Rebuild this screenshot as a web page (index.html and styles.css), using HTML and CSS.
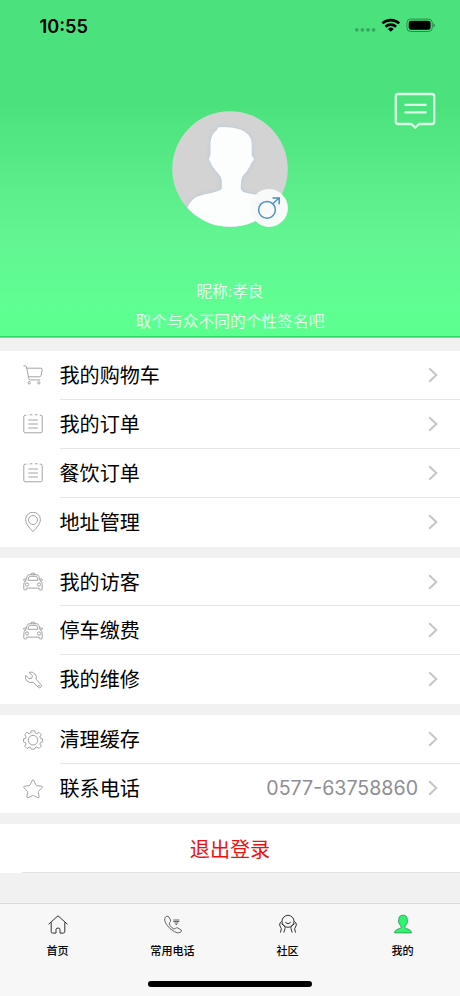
FILE: index.html
```html
<!DOCTYPE html>
<html lang="zh-CN">
<head>
<meta charset="utf-8">
<meta name="viewport" content="width=device-width, initial-scale=1">
<title>我的</title>
<link rel="stylesheet" href="styles.css">
</head>
<body>
<svg class="defs" aria-hidden="true">
  <symbol id="order" viewBox="0 0 20 20"><path d="M3.300 1.200H2.200Q.8 1.200.8 2.600v14.900q0 1.300 1.400 1.300h15.600q1.400 0 1.400-1.300V2.600q0-1.400-1.400-1.400h-1.100M6.800.8h2.700M11.800.8h2.700M4.800 1.200h.5M5.300 6h9.600M5.300 10h9.600M5.300 14h9.600"/></symbol>
  <symbol id="car" viewBox="0 0 20 20"><path d="M2.700 8.900 4.200 4.400Q4.700 2.700 6.400 2.700h7.200q1.700 0 2.200 1.700l1.500 4.500M3.200 7H1.500Q.2 7 .6 8.200q.3.900 2 .7M16.800 7h1.700q1.300 0 .9 1.200-.3.900-2 .7M2.700 8.900Q.8 10.400.8 12.400v4.700q0 .8.7.8h1.600q.7 0 .7-.8v-1h12.400v1q0 .8.7.8h1.600q.7 0 .7-.8v-4.700q0-2-1.900-3.500M5 8.300 6 5q.2-.7.9-.7h6.200q.7 0 .9.700l1 3.300zM8 2.600l.5-1.500h3l.5 1.500"/><circle cx="4" cy="12.500" r="1.600"/><circle cx="16" cy="12.500" r="1.600"/></symbol>
  <symbol id="chevron" viewBox="0 0 10 16"><path d="M1.200 1.200 8.300 8l-7.100 6.800"/></symbol>
</svg>

<main class="app">
  <header class="profile">
    <div class="status">
      <span class="clock">10:55</span>
      <svg class="signals" viewBox="0 0 84 16">
        <g fill="#35ab5c"><circle cx="4.800" cy="11.800" r="1.900"/><circle cx="10.400" cy="11.800" r="1.900"/><circle cx="16" cy="11.800" r="1.900"/><circle cx="21.600" cy="11.800" r="1.900"/></g>
        <g fill="none" stroke="#000" stroke-width="2.600"><path d="M30.400 5.400a12.300 12.300 0 0 1 16.800 0"/><path d="M33.500 8.700a7.800 7.800 0 0 1 10.600 0"/></g>
        <path d="M35.900 11a4.200 4.200 0 0 1 5.800 0L38.800 13.800z"/>
        <rect x="54.900" y="1.100" width="25.400" height="12.400" rx="3.700" fill="none" stroke="#2c8b4b"/>
        <rect x="56.700" y="2.800" width="21.900" height="9" rx="2.200"/>
        <path d="M81.400 5.200q1.500.6 1.500 2.100t-1.500 2.100z" fill="#2c8b4b"/>
      </svg>
    </div>
    <svg class="message" viewBox="0 0 42 38"><path d="M4 2h34q2.200 0 2.200 2.200v25.600q0 2.200-2.200 2.200H25l-3.800 3.600-3.800-3.600H4q-2.200 0-2.200-2.200V4.200Q1.800 2 4 2z"/><path d="M10.500 12.800h22M10.500 20.300h22"/></svg>
    <div class="avatar">
      <svg class="portrait" viewBox="172 111 116 116">
        <defs>
          <clipPath id="round"><circle cx="230" cy="169" r="57.800"/></clipPath>
          <filter id="halo" x="-20%" y="-20%" width="140%" height="140%"><feGaussianBlur stdDeviation="2.500"/></filter>
          <path id="person" d="M217.500 129.500Q217.300 127.500 219 127.200Q231 126 241 129.800Q251 134 251.700 143V154.500Q251.800 156 253.500 158Q254.500 160 252.300 161.500Q250.500 164 249.800 166.500Q247 171.500 242.800 176Q240.800 179 240.700 189Q242 192.500 249 193.500L263 196Q270.500 199 271.500 209V229H187V209Q190 197.500 204 194.500Q220.500 191.500 221.800 188.500V181Q221.500 176.500 217 172Q211.500 166 210.500 162Q208 159.500 209.500 157.500Q210.800 155.500 210.500 153V142Q211.500 133.500 217.500 129.500Z"/>
        </defs>
        <g clip-path="url(#round)">
          <rect x="172" y="111" width="116" height="116" fill="#d3d3d3"/>
          <use href="#person" fill="#b4cbda" filter="url(#halo)"/>
          <use href="#person" fill="#fcfdfd"/>
        </g>
      </svg>
      <svg class="gender" viewBox="0 0 38 38"><circle cx="19" cy="19" r="18.900" fill="#f8f9f9"/><g fill="none" stroke="#4a90c8" stroke-width="1.500"><circle cx="17" cy="20.800" r="8.400"/><path d="m22.800 14.800 6.200-5.800M22.500 9h6.700v6.200"/></g></svg>
    </div>
    <p class="nickname">昵称:孝良</p>
    <p class="signature">取个与众不同的个性签名吧</p>
  </header>

  <div class="groups">
    <section class="group">
      <a class="row"><svg class="icon" viewBox="0 0 20 20"><path d="M.5.900h1.800q.9 0 1.100 1l2.500 12q.2 1 1.300 1h10.200M4 3.200h13.800q1.700 0 1.400 1.600l-1.200 5.800q-.3 1.200-1.600 1.200H5.600"/><circle cx="6.200" cy="17.800" r="1.200"/><circle cx="15.800" cy="17.800" r="1.200"/></svg><span class="cell"><b>我的购物车</b><svg class="chevron"><use href="#chevron"/></svg></span></a>
      <a class="row"><svg class="icon"><use href="#order"/></svg><span class="cell"><b>我的订单</b><svg class="chevron"><use href="#chevron"/></svg></span></a>
      <a class="row"><svg class="icon"><use href="#order"/></svg><span class="cell"><b>餐饮订单</b><svg class="chevron"><use href="#chevron"/></svg></span></a>
      <a class="row"><svg class="icon" viewBox="0 0 20 20"><path d="M10 19.700Q2.600 12.200 2.600 7.600a7.400 7.400 0 0 1 14.800 0Q17.400 12.200 10 19.700z"/><circle cx="10" cy="8" r="4.500"/></svg><span class="cell"><b>地址管理</b><svg class="chevron"><use href="#chevron"/></svg></span></a>
    </section>
    <section class="group">
      <a class="row"><svg class="icon"><use href="#car"/></svg><span class="cell"><b>我的访客</b><svg class="chevron"><use href="#chevron"/></svg></span></a>
      <a class="row"><svg class="icon"><use href="#car"/></svg><span class="cell"><b>停车缴费</b><svg class="chevron"><use href="#chevron"/></svg></span></a>
      <a class="row"><svg class="icon" viewBox="0 0 20 20"><path d="M6 2.300Q9.500 1.200 12 4q2 2.400 1.100 5.200l4.800 5.300q1.200 1.500 0 2.700t-2.700 0L10 12.300Q6.600 13.400 4 11 1.700 8.500 2.700 5.300l3.400 3.500 2.700-.6.600-2.600z"/><circle cx="16" cy="15.700" r=".5"/></svg><span class="cell"><b>我的维修</b><svg class="chevron"><use href="#chevron"/></svg></span></a>
    </section>
    <section class="group">
      <a class="row"><svg class="icon" viewBox="0 0 20 20"><path d="M8.300 .8h3.400l.6 2.300 1.500.6 2.200-1.400 2.300 2.300-1.400 2.300.6 1.400 2 .6v3l-2 .6-.6 1.500 1.400 2.200-2.300 2.300-2.200-1.400-1.500.6-.6 1.400H8.300l-.6-1.400-1.500-.6L4 18.500l-2.300-2.300 1.400-2.200-.6-1.500-2-.6v-3l2-.6.600-1.400L1.700 4.600 4 2.300l2.200 1.400 1.500-.6z"/><circle cx="10" cy="10.200" r="4.800"/></svg><span class="cell"><b>清理缓存</b><svg class="chevron"><use href="#chevron"/></svg></span></a>
      <a class="row"><svg class="icon" viewBox="0 0 20 20"><path d="M9.300 1.200q.7-1 1.400 0l2.300 4.900q.2.400.7.500l5 .7q1 .3.400 1.200l-3.500 3.800q-.4.400-.3.900l.8 4.800q0 1.100-1 .8L10.500 16.600q-.5-.2-1 0L4.900 18.800q-1 .3-1-.8l.8-4.800q.1-.5-.3-.9L.9 8.500Q.3 7.600 1.300 7.300l5-.7q.5-.1.700-.5z"/></svg><span class="cell"><b>联系电话</b><span class="phone">0577-63758860</span><svg class="chevron"><use href="#chevron"/></svg></span></a>
    </section>
    <button class="logout">退出登录</button>
  </div>

  <nav class="tabs">
    <a class="tab"><svg viewBox="0 0 22 22"><path d="M1.500 10.300 11 1.800l9.500 8.500M4.200 8.300V17.500q0 1.600 1.600 1.600h3.200v-3.500q0-1.600 2-1.600t2 1.600v3.500h3.200q1.600 0 1.600-1.600V8.300"/></svg><span>首页</span></a>
    <a class="tab"><svg class="thin" viewBox="0 0 22 22"><path d="M3.400 3.200Q5 1.300 6.600 2.600l2 3.400Q9 7.400 7.500 8.700q-.7 1 .7 3.100 1.600 2.300 3.700 3.100 1 .2 1.700-.6 1.100-1 2.300-.3l3.300 2q.8.900-.5 2.100-2.500 2-6.300-.5Q7.500 15 4.500 10.500 1.400 5.700 3.400 3.200z"/><path d="M11.300 6h6M11.300 7.500h6M12.500 9h3.800M13.500 10.500h1.500"/></svg><span>常用电话</span></a>
    <a class="tab"><svg viewBox="0 0 22 22"><circle cx="11" cy="7.300" r="6"/><path d="M8.300 8.300q2.700 3 5.400 0M4.800 7.300Q2.600 8.500 2.600 11l1.800 3.800-1 3.800M4.500 9.700l3 2.500q1 1.200.5 2.300l-1.200 4.100M17.200 7.300q2.200 1.200 2.200 3.700l-1.800 3.800 1 3.800M17.500 9.700l-3 2.500q-1 1.200-.5 2.300l1.200 4.100"/></svg><span>社区</span></a>
    <a class="tab"><svg class="active" viewBox="0 0 22 22"><path d="M11 1.200q4.300 0 4.300 4.300l.2 2.400q-.6 2.900-2.500 4-.5 2.200 1 2.700 5 .8 5.500 4.300H2.500q.5-3.500 5.500-4.300 1.500-.5 1-2.700-1.900-1.100-2.500-4l.2-2.400q0-4.300 4.300-4.300z"/></svg><span>我的</span></a>
    <i class="home-bar"></i>
  </nav>
</main>
</body>
</html>
```
FILE: styles.css
```css
* { box-sizing: border-box; }

body {
  margin: 0;
  background: #f1f1f1;
  font-family: "Liberation Sans", "Noto Sans CJK SC", sans-serif;
  color: #000;
}

svg { display: block; flex: none; }
.defs { position: absolute; width: 0; height: 0; }

.app {
  width: 460px;
  height: 996px;
  display: flex;
  flex-direction: column;
  overflow: hidden;
}

.profile {
  position: relative;
  height: 338px;
  flex: none;
  display: flex;
  flex-direction: column;
  align-items: center;
  background: linear-gradient(#4be27d 0, #4be27d 105px, #58eb88 170px, #62f592 240px, #5fff92 310px, #5bff8e 335px);
  border-bottom: 1px solid #48f681;
  box-shadow: inset 0 -1px #34d66b;
  color: #e6ffee;
}

.status {
  width: 100%;
  height: 111px;
  padding: 18px 24px 0 39.5px;
  display: flex;
  justify-content: space-between;
  align-items: flex-start;
  color: #000;
}

.clock { font: 600 18.2px/16px Inter, sans-serif; }
.signals { width: 84px; height: 16px; }

.message {
  position: absolute;
  left: 394px;
  top: 92px;
  width: 42px;
  height: 38px;
  fill: none;
  stroke: #dcffe8;
  stroke-width: 2.3;
  stroke-linejoin: round;
}

.avatar { position: relative; width: 116px; height: 116px; }
.portrait { width: 116px; height: 116px; }
.gender { position: absolute; right: 0; bottom: 0; width: 38px; height: 38px; }

.nickname, .signature {
  margin: 0;
  line-height: 24px;
  font-family: "Noto Sans CJK SC", sans-serif;
  font-weight: 400;
}
.nickname { margin-top: 52px; font-size: 15.7px; }
.signature { margin-top: 6px; font-size: 15.75px; }

.groups {
  flex: 1;
  display: flex;
  flex-direction: column;
  gap: 11px;
  padding-top: 13px;
}

.group { background: #fff; }

.row {
  display: flex;
  align-items: center;
  height: 48.9px;
  padding-left: 22.5px;
}

.icon {
  width: 20px;
  height: 20px;
  margin-right: 17px;
  fill: none;
  stroke: #999;
  stroke-width: .9;
}

.cell {
  flex: 1;
  height: 100%;
  display: flex;
  align-items: center;
  padding-right: 22px;
  border-bottom: 1px solid #e6e6e6;
}
.row:last-child .cell { border-bottom-color: transparent; }

.cell b {
  flex: 1;
  font-family: "Noto Sans CJK SC", sans-serif;
  font-size: 20.1px;
  font-weight: 400;
  line-height: 28px;
}

.phone {
  margin-right: 10px;
  color: #8e8e92;
  font: 400 19.6px/28px Inter, sans-serif;
}

.chevron {
  width: 10px;
  height: 16px;
  fill: none;
  stroke: #c6c6ca;
  stroke-width: 2;
}

.logout {
  height: 49px;
  padding: 0;
  border: 0;
  background: linear-gradient(#e2e2e2, #e2e2e2) 22px 100% / 100% 1px no-repeat #fff;
  color: #ec1010;
  font: 400 20.1px/28px "Noto Sans CJK SC", sans-serif;
}

.tabs {
  position: relative;
  height: 93px;
  flex: none;
  display: flex;
  background: #f7f7f7;
  border-top: 1px solid #dadada;
}

.tab {
  flex: 1;
  display: flex;
  flex-direction: column;
  align-items: center;
  padding-top: 10px;
  font: 500 11.1px/16px "Noto Sans CJK SC", sans-serif;
}

.tab svg {
  width: 22px;
  height: 22px;
  margin-bottom: 6px;
  fill: none;
  stroke: #333;
  stroke-width: 1;
}
.tab .thin { stroke: #555; stroke-width: .9; }
.tab .active { fill: #2cf570; stroke: #347b4b; stroke-width: .7; }

.home-bar {
  position: absolute;
  left: 148px;
  bottom: 9px;
  width: 164px;
  height: 6px;
  border-radius: 3px;
  background: #000;
}
```
